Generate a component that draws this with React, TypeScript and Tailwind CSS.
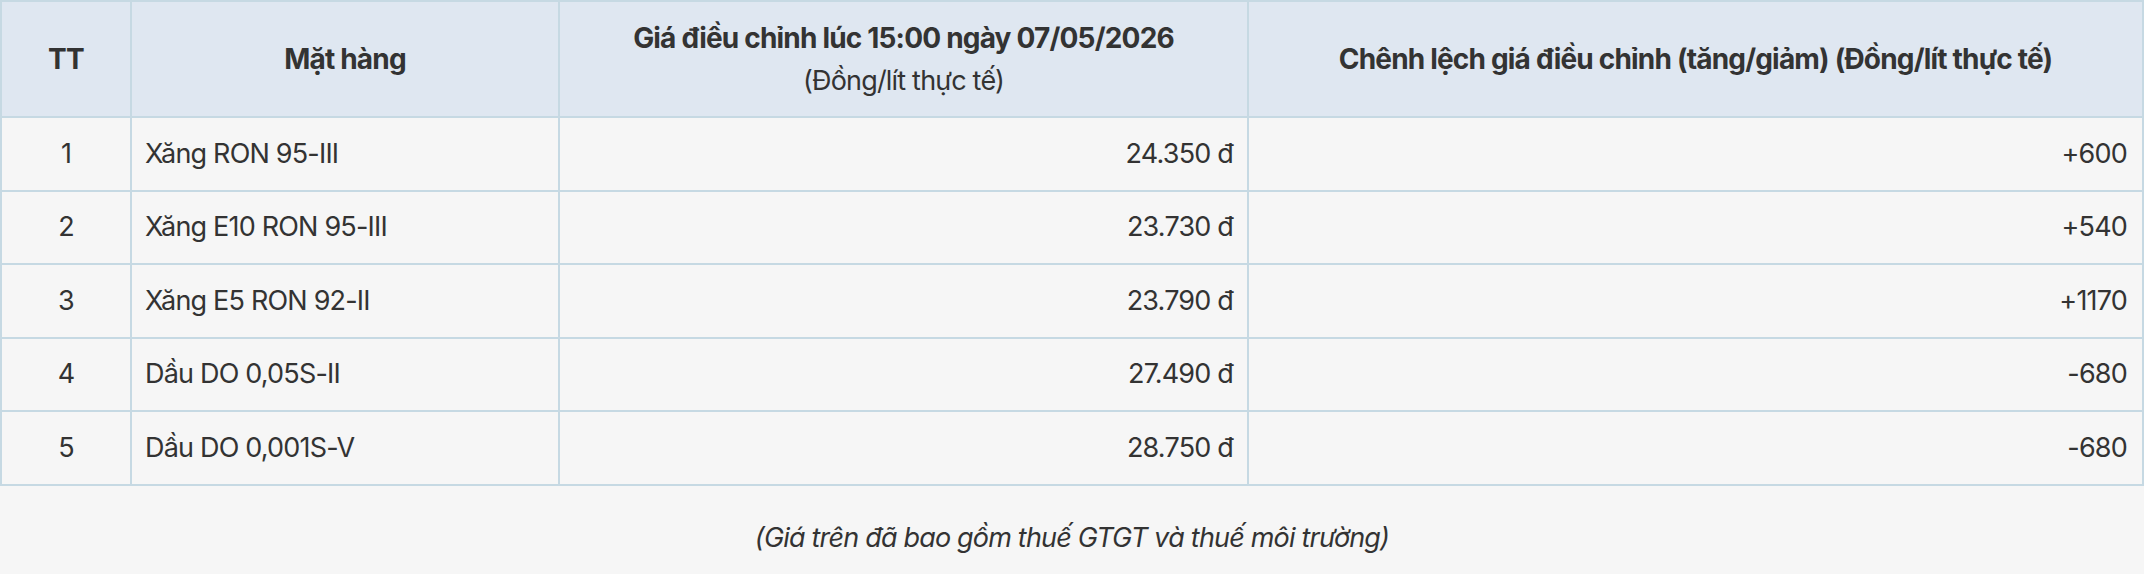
import React from "react";

const rows = [
  { tt: "1", name: "Xăng RON 95-III", price: "24.350 đ", diff: "+600" },
  { tt: "2", name: "Xăng E10 RON 95-III", price: "23.730 đ", diff: "+540" },
  { tt: "3", name: "Xăng E5 RON 92-II", price: "23.790 đ", diff: "+1170" },
  { tt: "4", name: "Dầu DO 0,05S-II", price: "27.490 đ", diff: "-680" },
  { tt: "5", name: "Dầu DO 0,001S-V", price: "28.750 đ", diff: "-680" },
];

export default function App() {
  return (
    <div
      className="w-[2144px] h-[574px] bg-[#f6f6f6] text-[#333333] overflow-hidden"
      style={{ fontFamily: "Inter, 'Noto Sans', sans-serif" }}
    >
      <table className="w-[2144px] table-fixed border-collapse text-[27px] tracking-[-0.03em]">
        <colgroup>
          <col className="w-[130px]" />
          <col className="w-[428px]" />
          <col className="w-[689px]" />
          <col />
        </colgroup>
        <thead>
          <tr className="bg-[#dfe7f1] h-[116px] text-[28px]">
            <th className="border-2 border-[#c6d9e3] font-bold text-center">TT</th>
            <th className="border-2 border-[#c6d9e3] font-bold text-center">Mặt hàng</th>
            <th className="border-2 border-[#c6d9e3] text-center">
              <div className="flex flex-col items-center gap-[9px]">
                <span className="font-bold leading-[33px]">Giá điều chỉnh lúc 15:00 ngày 07/05/2026</span>
                <span className="font-normal leading-[33px] text-[27px]">(Đồng/lít thực tế)</span>
              </div>
            </th>
            <th className="border-2 border-[#c6d9e3] font-bold text-center">
              Chênh lệch giá điều chỉnh (tăng/giảm) (Đồng/lít thực tế)
            </th>
          </tr>
        </thead>
        <tbody>
          {rows.map((r) => (
            <tr key={r.tt} className="h-[73.5px]">
              <td className="border-2 border-[#c6d9e3] text-center">{r.tt}</td>
              <td className="border-2 border-[#c6d9e3] pl-[13px]">{r.name}</td>
              <td className="border-2 border-[#c6d9e3] text-right pr-[14px]">{r.price}</td>
              <td className="border-2 border-[#c6d9e3] text-right pr-[15px]">{r.diff}</td>
            </tr>
          ))}
        </tbody>
      </table>
      <p className="text-center italic text-[27px] tracking-[-0.03em] mt-[32px]">
        (Giá trên đã bao gồm thuế GTGT và thuế môi trường)
      </p>
    </div>
  );
}
